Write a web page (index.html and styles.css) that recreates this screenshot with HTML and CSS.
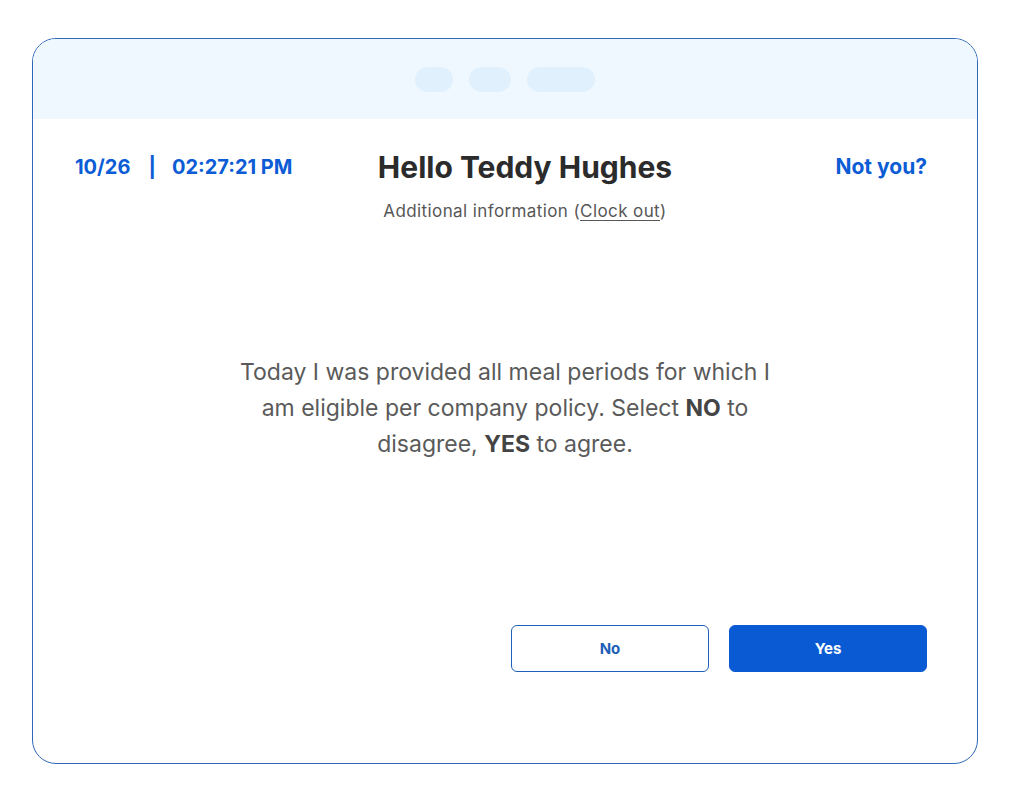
FILE: index.html
```html
<!DOCTYPE html>
<html lang="en">
<head>
<meta charset="utf-8">
<title>Meal period attestation</title>
<link rel="stylesheet" href="styles.css">
</head>
<body>
<div class="frame">
  <div class="topbar">
    <span class="pill pill-a"></span>
    <span class="pill pill-b"></span>
    <span class="pill pill-c"></span>
  </div>
  <div class="content">
    <div class="header">
      <div class="datetime">10/26<span class="sep">|</span>02:27:21 PM</div>
      <div class="center">
        <h1 class="title">Hello Teddy Hughes</h1>
        <p class="sub">Additional information (<a class="link" href="#">Clock out</a>)</p>
      </div>
      <div class="notyou"><a href="#">Not you?</a></div>
    </div>
    <p class="message">Today I was provided all meal periods for which I am eligible per company policy. Select <b>NO</b> to disagree, <b>YES</b> to agree.</p>
    <div class="actions">
      <button class="btn btn-no">No</button>
      <button class="btn btn-yes">Yes</button>
    </div>
  </div>
</div>
</body>
</html>
```
FILE: styles.css
```css
* { box-sizing: border-box; }
html, body { margin: 0; padding: 0; background: #fff; }
body {
  font-family: Inter, "Noto Sans", sans-serif;
  padding: 38px 34px 36px 32px;
}
.frame {
  width: 946px;
  height: 726px;
  border: 1px solid #2f68b8;
  border-radius: 24px;
  overflow: hidden;
  display: flex;
  flex-direction: column;
}
.topbar {
  height: 80px;
  background: #f0f8ff;
  display: flex;
  justify-content: center;
  align-items: center;
  gap: 16px;
}
.pill {
  height: 25px;
  border-radius: 13px;
  background: #e1f0fd;
}
.pill-a { width: 38px; }
.pill-b { width: 42px; }
.pill-c { width: 68px; }
.content {
  flex: 1;
  display: flex;
  flex-direction: column;
  padding: 0 50px 0 42px;
}
.header {
  display: grid;
  grid-template-columns: 1fr auto 1fr;
  align-items: start;
  padding-top: 33px;
}
.datetime {
  color: #0b5cd5;
  font-weight: 700;
  font-size: 20px;
  line-height: 30px;
  white-space: nowrap;
}
.sep { margin: 0 16px 0 18px; }
.center {
  text-align: center;
  margin-left: 48px;
}
.title {
  margin: 0;
  font-size: 30px;
  font-weight: 700;
  color: #2b2b2b;
  line-height: 30px;
}
.sub {
  margin: 19px 0 0;
  font-size: 17px;
  letter-spacing: 0.4px;
  color: #575757;
  line-height: 20px;
}
.link { color: #575757; text-decoration: underline; text-underline-offset: 3px; }
.notyou {
  text-align: right;
  font-size: 21px;
  font-weight: 700;
  line-height: 30px;
}
.notyou a { color: #0b5cd5; text-decoration: none; }
.message {
  margin: 133px auto 0;
  width: 558px;
  text-align: center;
  font-size: 23px;
  line-height: 36px;
  color: #5a5a5a;
  padding-left: 8px;
}
.message b { color: #444; }
.actions {
  margin-top: 163px;
  display: flex;
  justify-content: flex-end;
  gap: 20px;
}
.btn {
  width: 198px;
  height: 47px;
  border-radius: 6px;
  font-family: inherit;
  font-size: 15px;
  font-weight: 700;
  cursor: pointer;
}
.btn-no {
  background: #fff;
  border: 1px solid #1f5fb8;
  color: #1f5fb8;
}
.btn-yes {
  background: #0a5bd3;
  border: 1px solid #0a5bd3;
  color: #fff;
}
```
